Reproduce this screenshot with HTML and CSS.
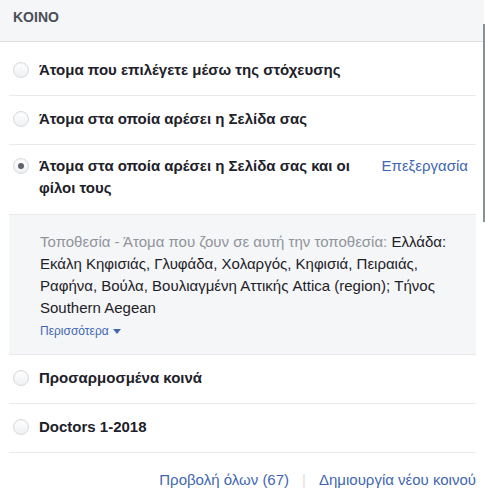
FILE: index.html
```html
<!DOCTYPE html>
<html lang="el">
<head>
<meta charset="utf-8">
<link rel="stylesheet" href="styles.css">
</head>
<body>
<div class="panel">
  <div class="header">KOINO</div>
  <ul class="list">
    <li class="row first">
      <span class="radio"></span>
      <span class="label">Άτομα που επιλέγετε μέσω της στόχευσης</span>
    </li>
    <li class="row">
      <span class="radio"></span>
      <span class="label">Άτομα στα οποία αρέσει η Σελίδα σας</span>
    </li>
    <li class="row selected">
      <span class="radio checked"></span>
      <span class="label">Άτομα στα οποία αρέσει η Σελίδα σας και οι φίλοι τους</span>
      <a class="edit">Επεξεργασία</a>
    </li>
    <li class="details">
      <p class="desc"><span class="muted">Τοποθεσία - Άτομα που ζουν σε αυτή την τοποθεσία:</span> Ελλάδα: Εκάλη Κηφισιάς, Γλυφάδα, Χολαργός, Κηφισιά, Πειραιάς, Ραφήνα, Βούλα, Βουλιαγμένη Αττικής Attica (region); Τήνος Southern Aegean</p>
      <a class="more">Περισσότερα <span class="caret"></span></a>
    </li>
    <li class="row">
      <span class="radio"></span>
      <span class="label">Προσαρμοσμένα κοινά</span>
    </li>
    <li class="row">
      <span class="radio"></span>
      <span class="label">Doctors 1-2018</span>
    </li>
  </ul>
  <div class="footer">
    <a class="link">Προβολή όλων (67)</a>
    <span class="sep">|</span>
    <a class="link">Δημιουργία νέου κοινού</a>
  </div>
  <div class="scrollbar"></div>
</div>
</body>
</html>
```

FILE: styles.css
```css
* { box-sizing: border-box; }
html, body {
  margin: 0;
  padding: 0;
  background: #fff;
  font-family: "Liberation Sans", Arial, sans-serif;
  color: #1d2129;
}
.panel {
  position: relative;
  width: 485px;
  height: 490px;
  overflow: hidden;
}
.header {
  height: 42px;
  background: #f5f6f7;
  border-bottom: 1px solid #dddfe2;
  width: 484px;
  padding: 9px 0 0 13px;
  font-size: 14px;
  font-weight: bold;
  color: #4b4f56;
  line-height: 16px;
}
.list {
  list-style: none;
  margin: 0;
  padding: 0 9px 0 9px;
  width: 485px;
}
.row {
  display: flex;
  align-items: flex-start;
  border-bottom: 1px solid #e9eaed;
  padding: 12px 0 14px 3px;
  font-size: 15px;
  line-height: 22px;
}
.row.first { padding-top: 17px; }
.row.selected { padding-top: 10px; padding-bottom: 15px; }
.radio {
  flex: none;
  width: 16px;
  height: 16px;
  margin: 3px 10px 0 1px;
  border-radius: 50%;
  border: 1px solid #d8dade;
  background: linear-gradient(#ffffff, #eef0f2);
  box-shadow: inset 0 1px 1px rgba(0,0,0,0.04);
  display: flex;
  align-items: center;
  justify-content: center;
}
.radio.checked::after {
  content: "";
  width: 6px;
  height: 6px;
  border-radius: 50%;
  background: #5e636c;
}
.label {
  font-weight: bold;
  flex: 1;
  line-height: 22px;
  color: #1d2129;
}
.selected .label { max-width: 322px; }
.edit {
  margin-left: auto;
  padding-right: 8px;
  color: #4267b2;
  font-weight: normal;
  font-size: 15px;
  line-height: 22px;
}
.details {
  background: #f5f6f7;
  border-bottom: 1px solid #e9eaed;
  padding: 16px 18px 15px 31px;
}
.desc {
  margin: 0;
  font-size: 15px;
  line-height: 22px;
  color: #1d2129;
}
.muted { color: #90949c; }
.more {
  display: flex;
  width: max-content;
  align-items: center;
  margin-top: 4px;
  height: 16px;
  font-size: 12px;
  line-height: 16px;
  color: #4267b2;
}
.caret {
  display: inline-block;
  width: 0;
  height: 0;
  margin-left: 4px;
  border-left: 4px solid transparent;
  border-right: 4px solid transparent;
  border-top: 5px solid #4267b2;
}
.footer {
  display: flex;
  justify-content: flex-end;
  align-items: center;
  gap: 13px;
  padding: 17px 9px 0 0;
  font-size: 15px;
  line-height: 20px;
}
.link { color: #4267b2; }
.sep { color: #dddfe2; }
.scrollbar {
  position: absolute;
  left: 483px;
  top: 24px;
  width: 2px;
  height: 198px;
  background: #8d8f92;
}
```
